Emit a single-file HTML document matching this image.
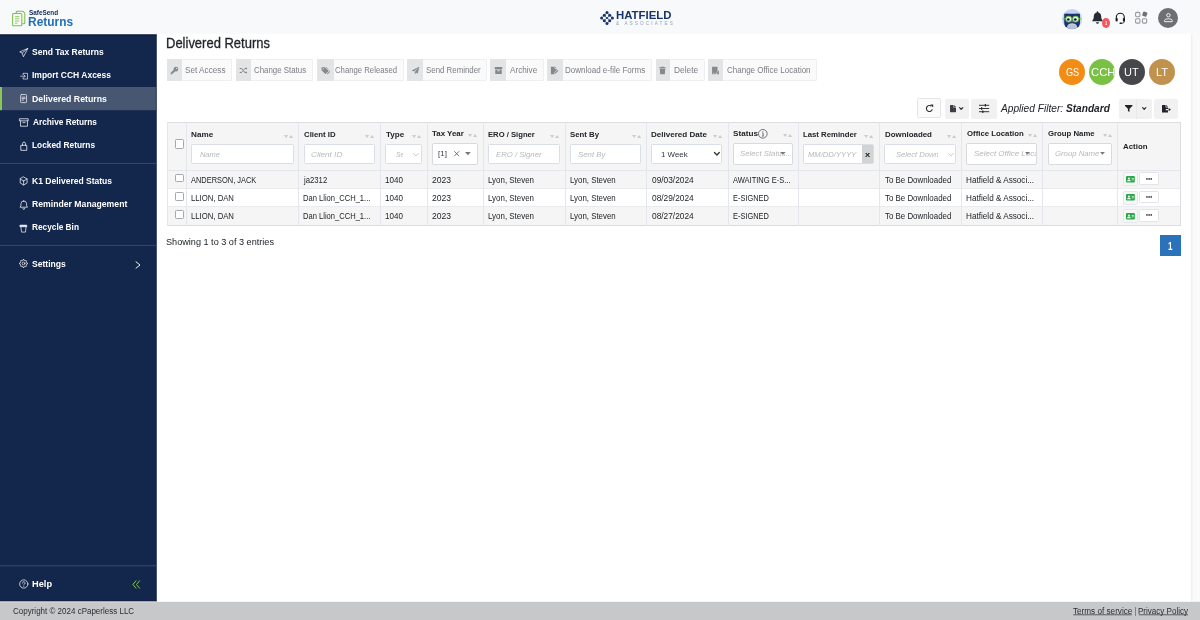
<!DOCTYPE html>
<html lang="en">
<head>
<meta charset="utf-8">
<title>Delivered Returns</title>
<style>
*{box-sizing:border-box;margin:0;padding:0}
html,body{width:1200px;height:620px;overflow:hidden;background:#fff;font-family:"Liberation Sans",sans-serif;color:#212529}
#app{position:absolute;left:0;top:0;width:1200px;height:620px;overflow:hidden;will-change:transform;background:#fff}
#app div,#app svg,#app span{position:absolute}
#app svg{overflow:visible}
.t{white-space:nowrap;transform-origin:0 0;display:block}
</style>
</head>
<body>
<div id="app">
<svg style="left:0px;top:0px;width:1200px;height:34px" viewBox="0 0 1200 34"><rect x="0" y="0" width="1200" height="33.8" fill="#f8f9fb"/></svg>
<svg style="left:0px;top:34px;width:157px;height:568px" viewBox="0 0 157 568"><rect x="0" y="0.5" width="156.5" height="567" fill="#13264b"/></svg>
<svg style="left:0px;top:34px;width:157px;height:2px" viewBox="0 0 157 2"><rect x="0" y="0.5" width="156.5" height="0.9" fill="#04143c"/></svg>
<svg style="left:155px;top:34px;width:2px;height:568px" viewBox="0 0 2 568"><rect x="0.9" y="0.5" width="0.6" height="567" fill="#0a1b42"/></svg>
<svg style="left:0px;top:600px;width:157px;height:2px" viewBox="0 0 157 2"><rect x="0" y="0.7" width="156.5" height="0.8" fill="#0a1b42"/></svg>
<svg style="left:1191px;top:34px;width:9px;height:568px" viewBox="0 0 9 568"><rect x="0.3" y="0.2" width="8.7" height="567.6" fill="#fafafa"/></svg>
<svg style="left:1191px;top:34px;width:2px;height:568px" viewBox="0 0 2 568"><rect x="0.3" y="0.2" width="1" height="567.6" fill="#ebebeb"/></svg>
<svg style="left:0px;top:601px;width:1200px;height:19px" viewBox="0 0 1200 19"><rect x="0" y="0.8" width="1200" height="18.2" fill="#c7c8ca"/></svg>
<svg style="left:0px;top:601px;width:157px;height:2px" viewBox="0 0 157 2"><rect x="0" y="0.5" width="156.5" height="0.8" fill="#e4e4e6"/></svg>
<svg style="left:12px;top:9.5px;width:14px;height:17px" viewBox="0 0 14 17" fill="none" stroke="#7ac143" stroke-width="1.050" stroke-linejoin="round"><path d="M4.200 3V2.200a1 1 0 0 1 1-1h5.600l2 2v9.600a1 1 0 0 1-1 1h-1.600" /><path d="M1.600 3.400h7.200a1 1 0 0 1 1 1v10.400a1 1 0 0 1-1 1H1.600a1 1 0 0 1-1-1V4.400a1 1 0 0 1 1-1z"/><path d="M3 6.600h4.400M3 8.800h4.400M3 11h4.400M3 13.200h2.400" stroke-width="0.800"/></svg>
<span class="t" style="left:28.91px;top:8px;font-size:7.2px;line-height:9px;height:9px;color:#0f2a55;transform:scaleX(0.8887);font-weight:bold;">SafeSend</span>
<span class="t" style="left:28.48px;top:15px;font-size:12.2px;line-height:14px;height:14px;color:#1e6fb8;transform:scaleX(0.9801);font-weight:bold;">Returns</span>
<svg style="left:599.85px;top:10.5px;width:14px;height:14px" viewBox="0 0 14 14" ><g transform="translate(7 7)" fill="#17336b"><path d="M0 -5.400L5.400 0 0 5.400 -5.400 0zM-2.700 -2.700L2.700 2.700M2.700 -2.700L-2.700 2.700" fill="none" stroke="#5a6e9f" stroke-width="0.800"/><circle cx="0" cy="-5.4" r="1.500"/><circle cx="-2.7" cy="-2.7" r="1.500"/><circle cx="2.7" cy="-2.7" r="1.500"/><circle cx="-5.4" cy="0" r="1.500"/><circle cx="5.4" cy="0" r="1.500"/><circle cx="-2.7" cy="2.7" r="1.500"/><circle cx="2.7" cy="2.7" r="1.500"/><circle cx="0" cy="5.4" r="1.500"/><path d="M-1.900 0L0 -1.100 1.900 0 0 1.100z"/></g></svg>
<span class="t" style="left:615.57px;top:9px;font-size:10.9px;line-height:12px;height:12px;color:#17336b;transform:scaleX(1.0454);font-weight:bold;">HATFIELD</span>
<span class="t" style="left:616.14px;top:21px;font-size:4.7px;line-height:5px;height:5px;color:#97a2b9;transform:scaleX(1.0009);letter-spacing:2.1px;">&amp; ASSOCIATES</span>
<svg style="left:1062.3px;top:8.8px;width:20.2px;height:20.2px" viewBox="0 0 20 20" ><defs><clipPath id="oc"><circle cx="10" cy="10" r="10"/></clipPath></defs><g clip-path="url(#oc)"><rect width="20" height="20" fill="#c6d1f1"/><path d="M2.200 4.600c.9.300 1.600.300 2.500-.2 1.500.300 3.400.400 5.300.400s3.800-.1 5.300-.4c.9.500 1.600.500 2.500.2v8.500c0 4.500-2.800 7.500-7.800 7.500s-7.800-3-7.800-7.500z" fill="#15346f"/><ellipse cx="10" cy="17.600" rx="5" ry="3.500" fill="#c3cbdf"/><path d="M6 16.400h8M5.600 17.900h8.800M6.400 19.300h7.200" stroke="#9aa9d0" stroke-width="0.600" stroke-dasharray="1.200 0.800"/><rect x="0.800" y="9.300" width="18.400" height="0.900" fill="#6cc04a"/><circle cx="6.600" cy="10" r="3.350" fill="#6cc04a"/><circle cx="13.500" cy="10" r="3.350" fill="#6cc04a"/><circle cx="6.600" cy="10" r="2.400" fill="#fff"/><circle cx="13.500" cy="10" r="2.400" fill="#fff"/><circle cx="6.300" cy="10.400" r="1.300" fill="#0d1226"/><circle cx="13.200" cy="10.400" r="1.300" fill="#0d1226"/><path d="M9.300 11.900h1.500L10.050 13.600z" fill="#f28c14"/></g></svg>
<svg style="left:1092px;top:11px;width:11px;height:13px" viewBox="0 0 11 13" ><path d="M5.500 0.300c.5 0 .8.300.8.800v.4c1.800.4 2.900 1.900 2.900 3.800 0 2 .5 3.400 1.500 4.300v.7H.3v-.7c1-.9 1.500-2.300 1.500-4.300 0-1.900 1.100-3.400 2.900-3.800v-.4c0-.5.300-.8.800-.8z" fill="#272b33"/><path d="M4 11.200h3a1.500 1.500 0 0 1-3 0z" fill="#272b33"/></svg>
<div style="left:1102.1px;top:17.9px;width:7.7px;height:10px;border-radius:50%;background:#f4585e"></div>
<span class="t" style="left:1104.8px;top:20px;font-size:5.2px;line-height:6px;height:6px;color:#fff;transform:scaleX(0.7623);font-weight:bold;">1</span>
<svg style="left:1114.5px;top:11.8px;width:10.6px;height:12.2px" viewBox="0 0 10.600 12.200" fill="none" stroke="#17191c" stroke-width="1.100" stroke-linecap="round"><path d="M1.300 6.200V5.300a4 4 0 0 1 8 0v.9"/><rect x="0.600" y="5.900" width="2.100" height="3.600" rx="0.900" fill="#17191c" stroke="none"/><rect x="7.900" y="5.900" width="2.100" height="3.600" rx="0.900" fill="#17191c" stroke="none"/><path d="M9.300 9.300c0 1.500-1 2-3 2" stroke-width="0.900"/><rect x="4.500" y="10.600" width="2.200" height="1.300" rx="0.600" fill="#17191c" stroke="none"/></svg>
<svg style="left:1135px;top:11px;width:13.5px;height:13px" viewBox="0 0 13.500 13" fill="none" stroke="#96989c" stroke-width="1.100"><rect x="0.600" y="1.400" width="4.300" height="4.300" rx="1.100"/><rect x="0.600" y="7.800" width="4.300" height="4.300" rx="1.100"/><rect x="7.400" y="7.800" width="4.300" height="4.300" rx="1.100"/><rect x="7.600" y="0.900" width="4.400" height="4.400" rx="0.800" fill="#6e7073" stroke="none" transform="rotate(20 9.800 3.100)"/></svg>
<div style="left:1158px;top:7.6px;width:20px;height:20px;border-radius:50%;background:#6d6f72"></div>
<svg style="left:1162.5px;top:12.2px;width:11px;height:10px" viewBox="0 0 11 10" fill="none" stroke="#fff" stroke-width="0.900" stroke-linejoin="round"><circle cx="5.400" cy="3.200" r="1.700"/><path d="M1.600 9.700V8.400c0-.9 1.700-1.600 3.800-1.600s3.800.7 3.800 1.600v1.300z"/></svg>
<svg style="left:0px;top:87px;width:156px;height:24px" viewBox="0 0 156 24"><rect x="0" y="0" width="155.9" height="23.2" fill="#475671"/></svg>
<svg style="left:0px;top:87px;width:2px;height:24px" viewBox="0 0 2 24"><rect x="0" y="0" width="2" height="23.2" fill="#88c656"/></svg>
<svg style="left:0px;top:162px;width:156px;height:2px" viewBox="0 0 156 2"><rect x="0" y="0.9" width="155.9" height="1" fill="#3c4a69"/></svg>
<svg style="left:0px;top:244px;width:156px;height:2px" viewBox="0 0 156 2"><rect x="0" y="0.9" width="155.9" height="1" fill="#3c4a69"/></svg>
<svg style="left:0px;top:565px;width:156px;height:2px" viewBox="0 0 156 2"><rect x="0" y="0.3" width="155.9" height="1" fill="#3c4a69"/></svg>
<svg style="left:19px;top:48px;width:9.2px;height:9px" viewBox="0 0 10 10" fill="none" stroke="#f2f4f8" stroke-width="0.800" stroke-linejoin="round" stroke-linecap="round"><path d="M9.400 0.600 L0.700 4.300 L3.500 5.700 L4.700 9.400 Z M9.400 0.600 L3.500 5.700"/></svg>
<svg style="left:19.6px;top:71.7px;width:8.4px;height:8.4px" viewBox="0 0 10 10" fill="none" stroke="#f2f4f8" stroke-width="0.800" stroke-linejoin="round" stroke-linecap="round"><path d="M3.600 3V1.600h5.400v6.800H3.600V7 M0.800 5h5.200 M4.600 3.400 L6.200 5 L4.600 6.600"/></svg>
<svg style="left:18.9px;top:94.2px;width:9.2px;height:9.2px" viewBox="0 0 10 10" fill="none" stroke="#f2f4f8" stroke-width="0.800" stroke-linejoin="round" stroke-linecap="round"><path d="M2.600 0.600h4.800a.8.800 0 0 1 .8.800v7.200a.8.800 0 0 1-.8.800H2.600a.8.800 0 0 1-.8-.8V1.400a.8.800 0 0 1 .8-.8z M3.400 3.500h3.200 M3.400 5h3.200 M3.400 6.500h1.600"/></svg>
<svg style="left:18.5px;top:117.5px;width:10px;height:9px" viewBox="0 0 10 9.400" fill="none" stroke="#f2f4f8" stroke-width="0.800" stroke-linejoin="round" stroke-linecap="round"><path d="M0.600 0.800h8.800v2.200H0.600z M1.400 3v5.600h7.200V3 M3.900 4.800h2.200"/></svg>
<svg style="left:18.5px;top:140.5px;width:10px;height:10px" viewBox="0 0 10 10" fill="none" stroke="#f2f4f8" stroke-width="0.800" stroke-linejoin="round" stroke-linecap="round"><path d="M2.200 4.300h5.600v5H2.200z M3.500 4.300V2.600a1.500 1.500 0 0 1 3 0v1.700"/></svg>
<svg style="left:18.7px;top:176.3px;width:9.3px;height:10px" viewBox="0 0 10 10" fill="none" stroke="#f2f4f8" stroke-width="0.800" stroke-linejoin="round" stroke-linecap="round"><path d="M5 0.700l3.700 2.100v4.400L5 9.300 1.300 7.200V2.800z M5 5v4.300 M5 5L1.300 2.800 M5 5l3.700-2.200"/></svg>
<svg style="left:18.7px;top:199.7px;width:9.5px;height:9.5px" viewBox="0 0 10 10" fill="none" stroke="#f2f4f8" stroke-width="0.800" stroke-linejoin="round" stroke-linecap="round"><path d="M5 1a3 3 0 0 0-3 3v2.200L1.100 7.600h7.800L8 6.200V4A3 3 0 0 0 5 1z M4 8.900a1 1 0 0 0 2 0"/></svg>
<svg style="left:19px;top:223.5px;width:9px;height:9px" viewBox="0 0 10 10" fill="none" stroke="#f2f4f8" stroke-width="0.800" stroke-linejoin="round" stroke-linecap="round"><path d="M1.400 1.300h7.200v1.700H1.400z" fill="#fff"/><path d="M2.100 3l.7 6h4.400l.7-6"/></svg>
<svg style="left:18.8px;top:259.3px;width:9px;height:9px" viewBox="0 0 10 10" fill="none" stroke="#f2f4f8" stroke-width="0.800" stroke-linejoin="round" stroke-linecap="round"><circle cx="5" cy="5" r="1.500"/><path d="M8.42 4.24L9.46 4.44L9.46 5.56L8.42 5.76L7.96 6.88L8.56 7.76L7.76 8.56L6.88 7.96L5.76 8.42L5.56 9.46L4.44 9.46L4.24 8.42L3.12 7.96L2.24 8.56L1.44 7.76L2.04 6.88L1.58 5.76L0.54 5.56L0.54 4.44L1.58 4.24L2.04 3.12L1.44 2.24L2.24 1.44L3.12 2.04L4.24 1.58L4.44 0.54L5.56 0.54L5.76 1.58L6.88 2.04L7.76 1.44L8.56 2.24L7.96 3.12z"/></svg>
<svg style="left:135px;top:261px;width:6px;height:8px" viewBox="0 0 6 8" fill="none" stroke="#fff" stroke-width="0.950" stroke-linecap="round" stroke-linejoin="round"><path d="M1 0.800L5 4 1 7.200"/></svg>
<svg style="left:18.7px;top:579px;width:9.6px;height:10px" viewBox="0 0 10 10" fill="none" stroke="#f2f4f8" stroke-width="0.800" stroke-linejoin="round" stroke-linecap="round"><circle cx="5" cy="5" r="4.300"/><path d="M3.700 4a1.300 1.300 0 1 1 1.900 1.100c-.4.200-.6.500-.6.900 M5 7.400v.1"/></svg>
<svg style="left:131.5px;top:579.5px;width:8.5px;height:9px" viewBox="0 0 8.500 9" fill="none" stroke="#88c656" stroke-width="1" stroke-linecap="round" stroke-linejoin="round"><path d="M4 0.800L0.900 4.500 4 8.200 M7.600 0.800L4.500 4.500l3.100 3.700"/></svg>
<span class="t" style="left:32.33px;top:46px;font-size:9.6px;line-height:11px;height:11px;color:#fff;transform:scaleX(0.8881);font-weight:bold;">Send Tax Returns</span>
<span class="t" style="left:32.31px;top:69px;font-size:9.6px;line-height:11px;height:11px;color:#fff;transform:scaleX(0.8860);font-weight:bold;">Import CCH Axcess</span>
<span class="t" style="left:32.29px;top:93px;font-size:9.6px;line-height:11px;height:11px;color:#fff;transform:scaleX(0.9118);font-weight:bold;">Delivered Returns</span>
<span class="t" style="left:32.9px;top:116px;font-size:9.6px;line-height:11px;height:11px;color:#fff;transform:scaleX(0.8630);font-weight:bold;">Archive Returns</span>
<span class="t" style="left:32.41px;top:139px;font-size:9.6px;line-height:11px;height:11px;color:#fff;transform:scaleX(0.8693);font-weight:bold;">Locked Returns</span>
<span class="t" style="left:31.92px;top:175px;font-size:9.6px;line-height:11px;height:11px;color:#fff;transform:scaleX(0.8885);font-weight:bold;">K1 Delivered Status</span>
<span class="t" style="left:32.09px;top:198px;font-size:9.6px;line-height:11px;height:11px;color:#fff;transform:scaleX(0.9030);font-weight:bold;">Reminder Management</span>
<span class="t" style="left:32.34px;top:221px;font-size:9.6px;line-height:11px;height:11px;color:#fff;transform:scaleX(0.8629);font-weight:bold;">Recycle Bin</span>
<span class="t" style="left:32.34px;top:258px;font-size:9.6px;line-height:11px;height:11px;color:#fff;transform:scaleX(0.8953);font-weight:bold;">Settings</span>
<span class="t" style="left:32.36px;top:578px;font-size:9.6px;line-height:11px;height:11px;color:#fff;transform:scaleX(0.9635);font-weight:bold;">Help</span>
<span class="t" style="left:166.2px;top:35px;font-size:14.5px;line-height:16px;height:16px;color:#212529;transform:scaleX(0.8958);-webkit-text-stroke:0.300px #212529;">Delivered Returns</span>
<div style="left:166.9px;top:58.7px;width:65.1px;height:22.7px;background:#fafafb;border:1px solid #eeeff1;border-radius:1px"></div>
<div style="left:166.9px;top:58.7px;width:15.1px;height:22.7px;background:#e3e4e5"></div>
<svg style="left:169.95px;top:65.7px;width:9px;height:9px" viewBox="0 0 10 10" ><path fill="#85888c" d="M6.600 0.800a2.600 2.600 0 0 0-2.500 3.400L0.800 7.500v1.700h1.700v-.9h.9v-.9h.9l1.500-1.500A2.600 2.600 0 1 0 6.600.8zm.7 2.600a.7.700 0 1 1 0-1.400.7.700 0 0 1 0 1.400z"/></svg>
<span class="t" style="left:185.15px;top:65px;font-size:8.3px;line-height:10px;height:10px;color:#7a7d82;transform:scaleX(0.9862);">Set Access</span>
<div style="left:235.6px;top:58.7px;width:77.8px;height:22.7px;background:#fafafb;border:1px solid #eeeff1;border-radius:1px"></div>
<div style="left:235.6px;top:58.7px;width:15.4px;height:22.7px;background:#e3e4e5"></div>
<svg style="left:238.8px;top:65.7px;width:9px;height:9px" viewBox="0 0 10 10" ><g fill="none" stroke="#7b7e83" stroke-width="1.100"><path d="M0.800 2.800h1.700c1.700 0 2.600 4.400 4.400 4.400h1.300 M0.800 7.200h1.700c.6 0 1.100-.6 1.500-1.300 M5.400 4.100c.4-.7.900-1.300 1.500-1.300h1.300"/></g><path d="M7.600 1.300l1.600 1.500-1.600 1.500z M7.600 5.700l1.600 1.500-1.600 1.500z" fill="#7b7e83"/></svg>
<span class="t" style="left:254.04px;top:65px;font-size:8.3px;line-height:10px;height:10px;color:#7a7d82;transform:scaleX(0.9498);">Change Status</span>
<div style="left:316.9px;top:58.7px;width:86.7px;height:22.7px;background:#fafafb;border:1px solid #eeeff1;border-radius:1px"></div>
<div style="left:316.9px;top:58.7px;width:17.1px;height:22.7px;background:#e3e4e5"></div>
<svg style="left:320.95px;top:65.7px;width:9px;height:9px" viewBox="0 0 10 10" ><path fill="#85888c" d="M0.600 1.500v3.200l3.900 3.900a.6.600 0 0 0 .85 0l2.800-2.800a.6.600 0 0 0 0-.85L4.250 1.500zM2.400 3.800a.7.700 0 1 1 0-1.400.7.700 0 0 1 0 1.400z"/><path fill="#85888c" d="M5.400 1.500l3.700 3.700a.6.600 0 0 1 0 .85L6.500 8.650l.3.300a.6.600 0 0 0 .85 0l2.100-2.300a.6.600 0 0 0 0-.85L6.300 1.500z"/></svg>
<span class="t" style="left:335.15px;top:65px;font-size:8.3px;line-height:10px;height:10px;color:#7a7d82;transform:scaleX(0.9333);">Change Released</span>
<div style="left:407.25px;top:58.7px;width:79.55px;height:22.7px;background:#fafafb;border:1px solid #eeeff1;border-radius:1px"></div>
<div style="left:407.25px;top:58.7px;width:15.65px;height:22.7px;background:#e3e4e5"></div>
<svg style="left:410.57px;top:65.7px;width:9px;height:9px" viewBox="0 0 10 10" ><path fill="#85888c" d="M9.200 0.800L0.800 5l2.300 1.100L8 2 4.200 6.700v2.500l1.500-1.700 1.800.9z"/></svg>
<span class="t" style="left:426.08px;top:65px;font-size:8.3px;line-height:10px;height:10px;color:#7a7d82;transform:scaleX(0.9487);">Send Reminder</span>
<div style="left:490.25px;top:58.7px;width:53.55px;height:22.7px;background:#fafafb;border:1px solid #eeeff1;border-radius:1px"></div>
<div style="left:490.25px;top:58.7px;width:15.6px;height:22.7px;background:#e3e4e5"></div>
<svg style="left:493.55px;top:65.7px;width:9px;height:9px" viewBox="0 0 10 10" ><path fill="#85888c" d="M0.800 1.200h8.400v2H0.800zM1.400 3.800h7.200v5H1.400zm2.300 1v.9h2.600v-.9z"/></svg>
<span class="t" style="left:509.56px;top:65px;font-size:8.3px;line-height:10px;height:10px;color:#7a7d82;transform:scaleX(0.9819);">Archive</span>
<div style="left:546.8px;top:58.7px;width:104.8px;height:22.7px;background:#fafafb;border:1px solid #eeeff1;border-radius:1px"></div>
<div style="left:546.8px;top:58.7px;width:16.2px;height:22.7px;background:#e3e4e5"></div>
<svg style="left:550.4px;top:65.7px;width:9px;height:9px" viewBox="0 0 10 10" ><path fill="#85888c" d="M1 0.800h4.200v2.400h2.200v1.300L4.800 7.100v2.100H1zM5.800 0.800l1.600 1.800H5.800zM5.400 7.400l3-3 1 1-3 3-1.200.2z"/></svg>
<span class="t" style="left:565.21px;top:65px;font-size:8.3px;line-height:10px;height:10px;color:#7a7d82;transform:scaleX(0.9655);">Download e-file Forms</span>
<div style="left:655.5px;top:58.7px;width:49.3px;height:22.7px;background:#fafafb;border:1px solid #eeeff1;border-radius:1px"></div>
<div style="left:655.5px;top:58.7px;width:14.5px;height:22.7px;background:#e3e4e5"></div>
<svg style="left:658.25px;top:65.7px;width:9px;height:9px" viewBox="0 0 10 10" ><path fill="#85888c" d="M3.600 0.800h2.800l.4.700h1.800v1H1.400v-1h1.800zM2 3.100h6l-.4 6.100H2.400z"/></svg>
<span class="t" style="left:674.34px;top:65px;font-size:8.3px;line-height:10px;height:10px;color:#7a7d82;transform:scaleX(1.0037);">Delete</span>
<div style="left:708.4px;top:58.7px;width:108.3px;height:22.7px;background:#fafafb;border:1px solid #eeeff1;border-radius:1px"></div>
<div style="left:708.4px;top:58.7px;width:14.6px;height:22.7px;background:#e3e4e5"></div>
<svg style="left:711.2px;top:65.7px;width:9px;height:9px" viewBox="0 0 10 10" ><path fill="#85888c" d="M1.200 0.800h6v4.400h1.600v4H6.400V7.600H5.200v1.600H3.600V7.600H2.800v1.600H1.200zM6.600 6v1h1.200V6z"/></svg>
<span class="t" style="left:726.95px;top:65px;font-size:8.3px;line-height:10px;height:10px;color:#7a7d82;transform:scaleX(0.9655);">Change Office Location</span>
<div style="left:1059px;top:58.5px;width:26px;height:26px;border-radius:50%;background:#f28c14"></div>
<span class="t" style="left:1065.59px;top:66px;font-size:10.9px;line-height:12px;height:12px;color:#fff;transform:scaleX(0.8386);">GS</span>
<div style="left:1089.2px;top:58.5px;width:26px;height:26px;border-radius:50%;background:#7ac143"></div>
<span class="t" style="left:1090.69px;top:66px;font-size:10.9px;line-height:12px;height:12px;color:#fff;transform:scaleX(1.0397);">CCH</span>
<div style="left:1119px;top:58.5px;width:26px;height:26px;border-radius:50%;background:#46474b"></div>
<span class="t" style="left:1124.28px;top:66px;font-size:10.9px;line-height:12px;height:12px;color:#fff;transform:scaleX(1.0063);">UT</span>
<div style="left:1149px;top:58.5px;width:26px;height:26px;border-radius:50%;background:#c0924e"></div>
<span class="t" style="left:1156px;top:66px;font-size:10.9px;line-height:12px;height:12px;color:#fff;transform:scaleX(1.0241);">LT</span>
<div style="left:917.1px;top:98px;width:23.6px;height:20.3px;border:1px solid #e4e5e6;border-radius:1.500px;background:#fbfbfb"></div>
<svg style="left:924.5px;top:104px;width:9px;height:9px" viewBox="0 0 9 9" fill="none" stroke="#2a2d31" stroke-width="1.150"><path d="M7.300 5.300A3 3 0 1 1 6.400 2.200"/><path d="M5.300 0.600h2.900v2.900z" fill="#2a2d31" stroke="none"/></svg>
<div style="left:945px;top:98.5px;width:23.6px;height:20px;border-radius:2px;background:#f1f1f2"></div>
<svg style="left:950px;top:105px;width:6px;height:7.2px" viewBox="0 0 6 7.200" ><path d="M0 0.400a.4.400 0 0 1 .4-.4H3.500v2.400h2.500v4.400a.4.400 0 0 1-.4.400H.4a.4.400 0 0 1-.4-.4zM4.100 0l1.900 1.900H4.100z" fill="#3a3d41"/></svg>
<svg style="left:959.4px;top:107px;width:4.4px;height:2.9px" viewBox="0 0 4.400 2.900" fill="none" stroke="#2a2d31" stroke-width="1.200" stroke-linecap="round" stroke-linejoin="round"><path d="M0.600 0.600L2.200 2.300 3.800 0.600"/></svg>
<div style="left:971.3px;top:98.5px;width:25.7px;height:20px;border-radius:2px;background:#f1f1f2"></div>
<svg style="left:979.3px;top:104px;width:10.2px;height:9px" viewBox="0 0 10.200 9" fill="none" stroke="#1f2226" stroke-width="0.900"><path d="M0 1.300h10.200M0 4.500h10.200M0 7.700h10.200"/><path d="M6.400 0v2.600M2.600 3.200v2.600M3.800 6.400v2.600" stroke-width="1.200"/></svg>
<span class="t" style="left:1000.81px;top:102px;font-size:11.2px;line-height:12px;height:12px;color:#212529;transform:scaleX(0.9081);font-style:italic;">Applied Filter:</span>
<span class="t" style="left:1066.3px;top:102px;font-size:11.2px;line-height:12px;height:12px;color:#212529;transform:scaleX(0.9041);font-weight:bold;font-style:italic;">Standard</span>
<div style="left:1119.3px;top:98.5px;width:32.6px;height:20px;border-radius:2px;background:#f1f1f2"></div>
<div style="left:1136.3px;top:98.5px;width:1px;height:20px;background:#e9e9ea"></div>
<svg style="left:1124.8px;top:105px;width:7.4px;height:7px" viewBox="0 0 7.400 7" ><path d="M0 0h7.400v.9L4.500 3.800V7L2.900 6V3.800L0 .9z" fill="#1f2226"/></svg>
<svg style="left:1141.6px;top:107px;width:4.4px;height:2.9px" viewBox="0 0 4.400 2.900" fill="none" stroke="#2a2d31" stroke-width="1.200" stroke-linecap="round" stroke-linejoin="round"><path d="M0.600 0.600L2.200 2.300 3.800 0.600"/></svg>
<div style="left:1154.3px;top:98.5px;width:23.9px;height:20px;border-radius:2px;background:#f1f1f2"></div>
<svg style="left:1161.5px;top:104.5px;width:9px;height:7.6px" viewBox="0 0 9 7.600" ><path d="M0 0.400a.4.400 0 0 1 .4-.4H3.600v2.400h2.400v1.500H3.800v1.400h2.200v2.300H.4a.4.400 0 0 1-.4-.4zM4.200 0l1.800 1.800H4.200zM6.600 2.900L9 4.600 6.600 6.300z" fill="#1f2226"/></svg>
<div style="left:167px;top:122px;width:1014px;height:103.5px;background:#fff"></div>
<div style="left:167px;top:122px;width:1014px;height:48.7px;background:#f5f5f5"></div>
<div style="left:167px;top:170.7px;width:1014px;height:18px;background:#f5f5f5"></div>
<div style="left:167px;top:206.7px;width:1014px;height:18.3px;background:#f5f5f5"></div>
<div style="left:167px;top:122px;width:1014px;height:1px;background:#dcdde1"></div>
<div style="left:167px;top:170.2px;width:1014px;height:1px;background:#e4e6ee"></div>
<div style="left:167px;top:188.3px;width:1014px;height:1px;background:#eaebef"></div>
<div style="left:167px;top:206.3px;width:1014px;height:1px;background:#eaebef"></div>
<div style="left:167px;top:224.6px;width:1014px;height:1px;background:#dcdde1"></div>
<div style="left:166.5px;top:122px;width:1px;height:103.7px;background:#e4e6ee"></div>
<div style="left:185.8px;top:122px;width:1px;height:103.7px;background:#e4e6ee"></div>
<div style="left:298px;top:122px;width:1px;height:103.7px;background:#e4e6ee"></div>
<div style="left:379.5px;top:122px;width:1px;height:103.7px;background:#e4e6ee"></div>
<div style="left:426.5px;top:122px;width:1px;height:103.7px;background:#e4e6ee"></div>
<div style="left:483.1px;top:122px;width:1px;height:103.7px;background:#e4e6ee"></div>
<div style="left:564.5px;top:122px;width:1px;height:103.7px;background:#e4e6ee"></div>
<div style="left:646.1px;top:122px;width:1px;height:103.7px;background:#e4e6ee"></div>
<div style="left:728px;top:122px;width:1px;height:103.7px;background:#e4e6ee"></div>
<div style="left:798px;top:122px;width:1px;height:103.7px;background:#e4e6ee"></div>
<div style="left:879.1px;top:122px;width:1px;height:103.7px;background:#e4e6ee"></div>
<div style="left:960.9px;top:122px;width:1px;height:103.7px;background:#e4e6ee"></div>
<div style="left:1041.9px;top:122px;width:1px;height:103.7px;background:#e4e6ee"></div>
<div style="left:1117px;top:122px;width:1px;height:103.7px;background:#e4e6ee"></div>
<div style="left:1180px;top:122px;width:1px;height:103.6px;background:#dcdde1"></div>
<span class="t" style="left:190.88px;top:130px;font-size:7.85px;line-height:9px;height:9px;color:#212529;transform:scaleX(1.0383);font-weight:bold;">Name</span>
<svg style="left:283.8px;top:135px;width:9.2px;height:2.9px" viewBox="0 0 9.200 2.900" ><path d="M0 0h4.200L2.100 2.900zM5 2.900h4.200L7.100 0z" fill="#cbccce"/></svg>
<span class="t" style="left:303.9px;top:130px;font-size:7.85px;line-height:9px;height:9px;color:#212529;transform:scaleX(0.9959);font-weight:bold;">Client ID</span>
<svg style="left:365.3px;top:135px;width:9.2px;height:2.9px" viewBox="0 0 9.200 2.900" ><path d="M0 0h4.200L2.100 2.900zM5 2.900h4.200L7.100 0z" fill="#cbccce"/></svg>
<span class="t" style="left:385.86px;top:130px;font-size:7.85px;line-height:9px;height:9px;color:#212529;transform:scaleX(1.0333);font-weight:bold;">Type</span>
<svg style="left:411.9px;top:135px;width:9.2px;height:2.9px" viewBox="0 0 9.200 2.900" ><path d="M0 0h4.200L2.100 2.900zM5 2.900h4.200L7.100 0z" fill="#cbccce"/></svg>
<span class="t" style="left:431.78px;top:129px;font-size:7.85px;line-height:9px;height:9px;color:#212529;transform:scaleX(1.0091);font-weight:bold;">Tax Year</span>
<svg style="left:468.4px;top:133.9px;width:9.2px;height:2.9px" viewBox="0 0 9.200 2.900" ><path d="M0 0h4.200L2.100 2.900zM5 2.900h4.200L7.100 0z" fill="#cbccce"/></svg>
<span class="t" style="left:488.07px;top:130px;font-size:7.85px;line-height:9px;height:9px;color:#212529;transform:scaleX(0.9760);font-weight:bold;">ERO / Signer</span>
<svg style="left:550px;top:135px;width:9.2px;height:2.9px" viewBox="0 0 9.200 2.900" ><path d="M0 0h4.200L2.100 2.900zM5 2.900h4.200L7.100 0z" fill="#cbccce"/></svg>
<span class="t" style="left:570px;top:130px;font-size:7.85px;line-height:9px;height:9px;color:#212529;transform:scaleX(0.9917);font-weight:bold;">Sent By</span>
<svg style="left:631.5px;top:135px;width:9.2px;height:2.9px" viewBox="0 0 9.200 2.900" ><path d="M0 0h4.200L2.100 2.900zM5 2.900h4.200L7.100 0z" fill="#cbccce"/></svg>
<span class="t" style="left:651.34px;top:130px;font-size:7.85px;line-height:9px;height:9px;color:#212529;transform:scaleX(1.0264);font-weight:bold;">Delivered Date</span>
<svg style="left:713.1px;top:135px;width:9.2px;height:2.9px" viewBox="0 0 9.200 2.900" ><path d="M0 0h4.200L2.100 2.900zM5 2.900h4.200L7.100 0z" fill="#cbccce"/></svg>
<span class="t" style="left:733.1px;top:129px;font-size:7.85px;line-height:9px;height:9px;color:#212529;transform:scaleX(1.0402);font-weight:bold;">Status</span>
<svg style="left:783.4px;top:133.9px;width:9.2px;height:2.9px" viewBox="0 0 9.200 2.900" ><path d="M0 0h4.200L2.100 2.900zM5 2.900h4.200L7.100 0z" fill="#cbccce"/></svg>
<span class="t" style="left:803.06px;top:130px;font-size:7.85px;line-height:9px;height:9px;color:#212529;transform:scaleX(0.9879);font-weight:bold;">Last Reminder</span>
<svg style="left:864.4px;top:135px;width:9.2px;height:2.9px" viewBox="0 0 9.200 2.900" ><path d="M0 0h4.200L2.100 2.900zM5 2.900h4.200L7.100 0z" fill="#cbccce"/></svg>
<span class="t" style="left:884.69px;top:130px;font-size:7.85px;line-height:9px;height:9px;color:#212529;transform:scaleX(1.0060);font-weight:bold;">Downloaded</span>
<svg style="left:946.7px;top:135px;width:9.2px;height:2.9px" viewBox="0 0 9.200 2.900" ><path d="M0 0h4.200L2.100 2.900zM5 2.900h4.200L7.100 0z" fill="#cbccce"/></svg>
<span class="t" style="left:966.8px;top:129px;font-size:7.85px;line-height:9px;height:9px;color:#212529;transform:scaleX(0.9922);font-weight:bold;">Office Location</span>
<svg style="left:1027.7px;top:134.2px;width:9.2px;height:2.9px" viewBox="0 0 9.200 2.900" ><path d="M0 0h4.200L2.100 2.900zM5 2.900h4.200L7.100 0z" fill="#cbccce"/></svg>
<span class="t" style="left:1047.74px;top:129px;font-size:7.85px;line-height:9px;height:9px;color:#212529;transform:scaleX(0.9913);font-weight:bold;">Group Name</span>
<svg style="left:1102.8px;top:134.1px;width:9.2px;height:2.9px" viewBox="0 0 9.200 2.900" ><path d="M0 0h4.200L2.100 2.900zM5 2.900h4.200L7.100 0z" fill="#cbccce"/></svg>
<span class="t" style="left:1123.11px;top:142px;font-size:7.85px;line-height:9px;height:9px;color:#212529;transform:scaleX(1.0061);font-weight:bold;">Action</span>
<svg style="left:758.1px;top:129.1px;width:9.6px;height:9.6px" viewBox="0 0 9.600 9.600" ><circle cx="4.800" cy="4.800" r="4.350" fill="#f5f5f5" stroke="#3b3f44" stroke-width="0.700"/><path d="M4.300 4.100h.8v3M4 7.100h1.700" fill="none" stroke="#3b3f44" stroke-width="0.700"/><circle cx="4.850" cy="2.700" r="0.550" fill="#3b3f44"/></svg>
<div style="left:191.3px;top:144.4px;width:102.5px;height:19.2px;background:#fff;border:1px solid #dadee8;border-radius:1.500px;overflow:hidden"><span class="t" style="left:7.45px;top:4.6px;font-size:7.85px;line-height:9px;height:9px;color:#b6b8bb;transform:scaleX(0.9471);font-style:italic;">Name</span></div>
<div style="left:304px;top:144.4px;width:70.8px;height:19.2px;background:#fff;border:1px solid #dadee8;border-radius:1.500px;overflow:hidden"><span class="t" style="left:6.29px;top:4.6px;font-size:7.85px;line-height:9px;height:9px;color:#b6b8bb;transform:scaleX(1.0396);font-style:italic;">Client ID</span></div>
<div style="left:385.2px;top:144.4px;width:36.4px;height:19.2px;background:#fff;border:1px solid #dadee8;border-radius:1.500px;overflow:hidden"><div style="left:7.8px;top:0.6px;width:9.3px;height:16px;overflow:hidden"><span class="t" style="left:2px;top:4px;font-size:7.85px;line-height:9px;height:9px;color:#b6b8bb;transform:scaleX(0.8527);font-style:italic;">Se</span></div><svg style="left:26.9px;top:7.3px;width:5.8px;height:3.5px" viewBox="0 0 5.800 3.500" fill="none" stroke="#c4c6c9" stroke-width="0.9" stroke-linecap="round" stroke-linejoin="round"><path d="M0.500 0.500L2.900 3 5.300 0.500"/></svg></div>
<div style="left:432.1px;top:142.9px;width:45.7px;height:22.1px;background:#fff;border:1px solid #d9dadd;border-radius:2px;overflow:hidden"><span class="t" style="left:4.43px;top:5.1px;font-size:7.85px;line-height:9px;height:9px;color:#3c4043;transform:scaleX(1.0147);">[1]</span><svg style="left:20.8px;top:7.2px;width:5.4px;height:5.4px" viewBox="0 0 5.400 5.400" stroke="#5d6165" stroke-width="0.850" stroke-linecap="round"><path d="M0.500 0.500L4.900 4.900M4.900 0.500L0.500 4.900"/></svg><svg style="left:32px;top:8.3px;width:5.8px;height:3.2px" viewBox="0 0 5.8 3.2" ><path d="M0 0h5.8L2.9 3.2z" fill="#74777b"/></svg></div>
<div style="left:488.1px;top:144.4px;width:71.7px;height:19.2px;background:#fff;border:1px solid #dadee8;border-radius:1.500px;overflow:hidden"><span class="t" style="left:6.88px;top:4.6px;font-size:7.85px;line-height:9px;height:9px;color:#b6b8bb;transform:scaleX(0.9857);font-style:italic;">ERO / Signer</span></div>
<div style="left:570px;top:144.4px;width:70.8px;height:19.2px;background:#fff;border:1px solid #dadee8;border-radius:1.500px;overflow:hidden"><span class="t" style="left:7.2px;top:4.6px;font-size:7.85px;line-height:9px;height:9px;color:#b6b8bb;transform:scaleX(0.9999);font-style:italic;">Sent By</span></div>
<div style="left:651.3px;top:144.4px;width:71.2px;height:19.2px;background:#fff;border:1px solid #dadee8;border-radius:1.500px;overflow:hidden"><span class="t" style="left:8.39px;top:4.6px;font-size:7.85px;line-height:9px;height:9px;color:#34383c;transform:scaleX(1.0096);">1 Week</span><svg style="left:61.6px;top:7px;width:5.8px;height:3.5px" viewBox="0 0 5.800 3.500" fill="none" stroke="#2b2f33" stroke-width="1.25" stroke-linecap="round" stroke-linejoin="round"><path d="M0.500 0.500L2.900 3 5.300 0.500"/></svg></div>
<div style="left:733.1px;top:142.9px;width:59.8px;height:22.1px;background:#fff;border:1px solid #d9dadd;border-radius:2px;overflow:hidden"><span class="t" style="left:6.15px;top:5.1px;font-size:7.85px;line-height:9px;height:9px;color:#b6b8bb;transform:scaleX(0.9897);font-style:italic;">Select Status...</span><svg style="left:45.9px;top:8.1px;width:5.6px;height:2.8px" viewBox="0 0 5.6 2.8" ><path d="M0 0h5.6L2.8 2.8z" fill="#777a7e"/></svg></div>
<div style="left:803.1px;top:144.4px;width:70.8px;height:19.2px;background:#fff;border:1px solid #dadee8;border-radius:1.500px;overflow:hidden"><span class="t" style="left:3.83px;top:4.6px;font-size:7.85px;line-height:9px;height:9px;color:#b6b8bb;transform:scaleX(0.9725);font-style:italic;">MM/DD/YYYY</span><div style="left:58px;top:-1.4px;width:12.9px;height:21px;background:#d2d3d5"></div><span class="t" style="left:60.72px;top:4.6px;font-size:8px;line-height:9px;height:9px;color:#212529;transform:scaleX(1.1644);font-weight:bold;">x</span></div>
<div style="left:884.3px;top:144.4px;width:71.5px;height:19.2px;background:#fff;border:1px solid #dadee8;border-radius:1.500px;overflow:hidden"><div style="left:7.7px;top:0.6px;width:44.9px;height:16px;overflow:hidden"><span class="t" style="left:3px;top:4px;font-size:7.85px;line-height:9px;height:9px;color:#b6b8bb;transform:scaleX(0.9725);font-style:italic;">Select Downloaded</span></div><svg style="left:62.3px;top:7.3px;width:5.8px;height:3.5px" viewBox="0 0 5.800 3.500" fill="none" stroke="#c4c6c9" stroke-width="0.9" stroke-linecap="round" stroke-linejoin="round"><path d="M0.500 0.500L2.900 3 5.300 0.500"/></svg></div>
<div style="left:966px;top:142.9px;width:71.3px;height:22.1px;background:#fff;border:1px solid #d9dadd;border-radius:2px;overflow:hidden"><span class="t" style="left:6.5px;top:5.1px;font-size:7.85px;line-height:9px;height:9px;color:#b6b8bb;transform:scaleX(1.0147);font-style:italic;">Select Office Location</span><svg style="left:58.3px;top:8.1px;width:5px;height:2.8px" viewBox="0 0 5 2.8" ><path d="M0 0h5L2.5 2.8z" fill="#777a7e"/></svg></div>
<div style="left:1047.8px;top:142.9px;width:64.4px;height:22.1px;background:#fff;border:1px solid #d9dadd;border-radius:2px;overflow:hidden"><span class="t" style="left:6.17px;top:5.1px;font-size:7.85px;line-height:9px;height:9px;color:#b6b8bb;transform:scaleX(0.9863);font-style:italic;">Group Name</span><svg style="left:50.9px;top:8.1px;width:5px;height:2.8px" viewBox="0 0 5 2.8" ><path d="M0 0h5L2.5 2.8z" fill="#777a7e"/></svg></div>
<div style="left:174.6px;top:139.4px;width:9.5px;height:9.6px;border:1px solid #a6a8ab;border-radius:1.300px;background:#fff"></div>
<span class="t" style="left:191.14px;top:176px;font-size:8.2px;line-height:9px;height:9px;color:#212529;transform:scaleX(0.9082);">ANDERSON, JACK</span>
<span class="t" style="left:303.54px;top:176px;font-size:8.2px;line-height:9px;height:9px;color:#212529;transform:scaleX(0.9422);">ja2312</span>
<span class="t" style="left:384.96px;top:176px;font-size:8.2px;line-height:9px;height:9px;color:#212529;transform:scaleX(0.9837);">1040</span>
<span class="t" style="left:431.74px;top:176px;font-size:8.2px;line-height:9px;height:9px;color:#212529;transform:scaleX(1.0463);">2023</span>
<span class="t" style="left:487.89px;top:176px;font-size:8.2px;line-height:9px;height:9px;color:#212529;transform:scaleX(0.9689);">Lyon, Steven</span>
<span class="t" style="left:569.67px;top:176px;font-size:8.2px;line-height:9px;height:9px;color:#212529;transform:scaleX(0.9625);">Lyon, Steven</span>
<span class="t" style="left:651.74px;top:176px;font-size:8.2px;line-height:9px;height:9px;color:#212529;transform:scaleX(1.0187);">09/03/2024</span>
<span class="t" style="left:733.19px;top:176px;font-size:8.2px;line-height:9px;height:9px;color:#212529;transform:scaleX(0.9181);">AWAITING E-S...</span>
<span class="t" style="left:884.53px;top:176px;font-size:8.2px;line-height:9px;height:9px;color:#212529;transform:scaleX(0.9649);">To Be Downloaded</span>
<span class="t" style="left:965.61px;top:176px;font-size:8.2px;line-height:9px;height:9px;color:#212529;transform:scaleX(0.9972);">Hatfield &amp; Associ...</span>
<div style="left:174.7px;top:173.6px;width:8.9px;height:8.9px;border:1px solid #a6a8ab;border-radius:1.300px;background:#fff"></div>
<div style="left:1122.6px;top:172.2px;width:15.5px;height:13.8px;border:1px solid #e6e7e9;border-radius:1.500px;background:#f7f7f8"></div>
<svg style="left:1125.9px;top:175.6px;width:8.8px;height:6.6px" viewBox="0 0 9 6.600" ><rect width="9" height="6.600" rx="0.800" fill="#2aa84a"/><circle cx="3" cy="2.400" r="1.050" fill="#fff"/><path d="M1.200 5.400c0-1.300.8-1.700 1.800-1.700s1.800.4 1.800 1.700z" fill="#fff"/><path d="M5.800 2h2.200v.8H5.800zM5.800 3.600h2.200v.8H5.800z" fill="#dff3e3"/></svg>
<div style="left:1139.2px;top:172.2px;width:19.8px;height:12.5px;border:1px solid #e3e4e6;border-radius:1.500px;background:#fff"></div>
<svg style="left:1145.8px;top:177.5px;width:6.2px;height:1.8px" viewBox="0 0 6.100 1.800" ><circle cx="0.900" cy="0.900" r="0.850" fill="#34383c"/><circle cx="3.050" cy="0.900" r="0.850" fill="#34383c"/><circle cx="5.200" cy="0.900" r="0.850" fill="#34383c"/></svg>
<span class="t" style="left:190.85px;top:194px;font-size:8.2px;line-height:9px;height:9px;color:#212529;transform:scaleX(0.9439);">LLION, DAN</span>
<span class="t" style="left:303.45px;top:194px;font-size:8.2px;line-height:9px;height:9px;color:#212529;transform:scaleX(0.9257);">Dan Llion_CCH_1...</span>
<span class="t" style="left:384.96px;top:194px;font-size:8.2px;line-height:9px;height:9px;color:#212529;transform:scaleX(0.9837);">1040</span>
<span class="t" style="left:431.74px;top:194px;font-size:8.2px;line-height:9px;height:9px;color:#212529;transform:scaleX(1.0463);">2023</span>
<span class="t" style="left:487.89px;top:194px;font-size:8.2px;line-height:9px;height:9px;color:#212529;transform:scaleX(0.9689);">Lyon, Steven</span>
<span class="t" style="left:569.67px;top:194px;font-size:8.2px;line-height:9px;height:9px;color:#212529;transform:scaleX(0.9625);">Lyon, Steven</span>
<span class="t" style="left:651.74px;top:194px;font-size:8.2px;line-height:9px;height:9px;color:#212529;transform:scaleX(1.0187);">08/29/2024</span>
<span class="t" style="left:732.65px;top:194px;font-size:8.2px;line-height:9px;height:9px;color:#212529;transform:scaleX(0.9076);">E-SIGNED</span>
<span class="t" style="left:884.53px;top:194px;font-size:8.2px;line-height:9px;height:9px;color:#212529;transform:scaleX(0.9649);">To Be Downloaded</span>
<span class="t" style="left:965.61px;top:194px;font-size:8.2px;line-height:9px;height:9px;color:#212529;transform:scaleX(0.9972);">Hatfield &amp; Associ...</span>
<div style="left:174.7px;top:192px;width:8.9px;height:8.9px;border:1px solid #a6a8ab;border-radius:1.300px;background:#fff"></div>
<div style="left:1122.6px;top:190.8px;width:15.5px;height:13.8px;border:1px solid #e6e7e9;border-radius:1.500px;background:#f7f7f8"></div>
<svg style="left:1125.9px;top:194.2px;width:8.8px;height:6.6px" viewBox="0 0 9 6.600" ><rect width="9" height="6.600" rx="0.800" fill="#2aa84a"/><circle cx="3" cy="2.400" r="1.050" fill="#fff"/><path d="M1.200 5.400c0-1.300.8-1.700 1.800-1.700s1.800.4 1.800 1.700z" fill="#fff"/><path d="M5.800 2h2.200v.8H5.800zM5.800 3.600h2.200v.8H5.800z" fill="#dff3e3"/></svg>
<div style="left:1139.2px;top:190.8px;width:19.8px;height:12.5px;border:1px solid #e3e4e6;border-radius:1.500px;background:#fff"></div>
<svg style="left:1145.8px;top:196.1px;width:6.2px;height:1.8px" viewBox="0 0 6.100 1.800" ><circle cx="0.900" cy="0.900" r="0.850" fill="#34383c"/><circle cx="3.050" cy="0.900" r="0.850" fill="#34383c"/><circle cx="5.200" cy="0.900" r="0.850" fill="#34383c"/></svg>
<span class="t" style="left:190.85px;top:212px;font-size:8.2px;line-height:9px;height:9px;color:#212529;transform:scaleX(0.9439);">LLION, DAN</span>
<span class="t" style="left:303.45px;top:212px;font-size:8.2px;line-height:9px;height:9px;color:#212529;transform:scaleX(0.9257);">Dan Llion_CCH_1...</span>
<span class="t" style="left:384.96px;top:212px;font-size:8.2px;line-height:9px;height:9px;color:#212529;transform:scaleX(0.9837);">1040</span>
<span class="t" style="left:431.74px;top:212px;font-size:8.2px;line-height:9px;height:9px;color:#212529;transform:scaleX(1.0463);">2023</span>
<span class="t" style="left:487.89px;top:212px;font-size:8.2px;line-height:9px;height:9px;color:#212529;transform:scaleX(0.9689);">Lyon, Steven</span>
<span class="t" style="left:569.67px;top:212px;font-size:8.2px;line-height:9px;height:9px;color:#212529;transform:scaleX(0.9625);">Lyon, Steven</span>
<span class="t" style="left:651.74px;top:212px;font-size:8.2px;line-height:9px;height:9px;color:#212529;transform:scaleX(1.0187);">08/27/2024</span>
<span class="t" style="left:732.65px;top:212px;font-size:8.2px;line-height:9px;height:9px;color:#212529;transform:scaleX(0.9076);">E-SIGNED</span>
<span class="t" style="left:884.53px;top:212px;font-size:8.2px;line-height:9px;height:9px;color:#212529;transform:scaleX(0.9649);">To Be Downloaded</span>
<span class="t" style="left:965.61px;top:212px;font-size:8.2px;line-height:9px;height:9px;color:#212529;transform:scaleX(0.9972);">Hatfield &amp; Associ...</span>
<div style="left:174.7px;top:210.4px;width:8.9px;height:8.9px;border:1px solid #a6a8ab;border-radius:1.300px;background:#fff"></div>
<div style="left:1122.6px;top:209.1px;width:15.5px;height:13.8px;border:1px solid #e6e7e9;border-radius:1.500px;background:#f7f7f8"></div>
<svg style="left:1125.9px;top:212.5px;width:8.8px;height:6.6px" viewBox="0 0 9 6.600" ><rect width="9" height="6.600" rx="0.800" fill="#2aa84a"/><circle cx="3" cy="2.400" r="1.050" fill="#fff"/><path d="M1.200 5.400c0-1.300.8-1.700 1.800-1.700s1.800.4 1.800 1.700z" fill="#fff"/><path d="M5.800 2h2.200v.8H5.800zM5.800 3.600h2.200v.8H5.800z" fill="#dff3e3"/></svg>
<div style="left:1139.2px;top:209.1px;width:19.8px;height:12.5px;border:1px solid #e3e4e6;border-radius:1.500px;background:#fff"></div>
<svg style="left:1145.8px;top:214.4px;width:6.2px;height:1.8px" viewBox="0 0 6.100 1.800" ><circle cx="0.900" cy="0.900" r="0.850" fill="#34383c"/><circle cx="3.050" cy="0.900" r="0.850" fill="#34383c"/><circle cx="5.200" cy="0.900" r="0.850" fill="#34383c"/></svg>
<span class="t" style="left:166.1px;top:237px;font-size:9.3px;line-height:10px;height:10px;color:#212529;transform:scaleX(0.9805);">Showing 1 to 3 of 3 entries</span>
<div style="left:1160.2px;top:235.3px;width:20.6px;height:20.6px;background:#2a72b9"></div>
<span class="t" style="left:1167.98px;top:240px;font-size:10.5px;line-height:12px;height:12px;color:#fff;transform:scaleX(0.7672);font-weight:bold;">1</span>
<span class="t" style="left:12.62px;top:606px;font-size:8.5px;line-height:10px;height:10px;color:#2b2d30;transform:scaleX(0.9416);">Copyright © 2024 cPaperless LLC</span>
<span class="t" style="left:1073.31px;top:606px;font-size:8.5px;line-height:10px;height:10px;color:#2b2d30;transform:scaleX(0.9593);">Terms of service</span>
<svg style="left:1073px;top:614px;width:59px;height:2px" viewBox="0 0 59 2"><rect x="0.3" y="0.5" width="58.4" height="0.7" fill="#2b2d30"/></svg>
<span class="t" style="left:1134.5px;top:606px;font-size:8.5px;line-height:10px;height:10px;color:#2b2d30;transform:scaleX(0.6335);">|</span>
<span class="t" style="left:1138.21px;top:606px;font-size:8.5px;line-height:10px;height:10px;color:#2b2d30;transform:scaleX(0.9455);">Privacy Policy</span>
<svg style="left:1138px;top:614px;width:50px;height:2px" viewBox="0 0 50 2"><rect x="0.9" y="0.5" width="49.1" height="0.7" fill="#2b2d30"/></svg>
</div>
</body>
</html>
